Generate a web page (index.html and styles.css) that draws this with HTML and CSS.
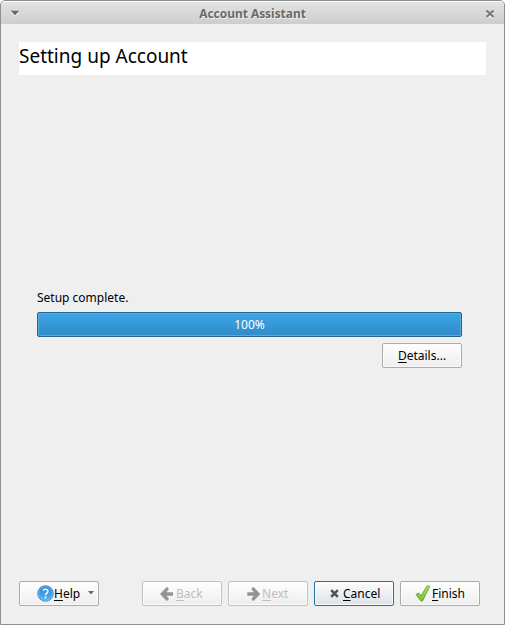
FILE: index.html
```html
<!DOCTYPE html>
<html lang="en">
<head>
<meta charset="utf-8">
<title>Account Assistant</title>
<link rel="stylesheet" href="styles.css">
</head>
<body>
<div class="window">
  <header class="titlebar">
    <svg class="menu-icon" width="10" height="7" viewBox="0 0 10 7"><path d="M1 2h8L5 6.8z" fill="#fff"/><path d="M.8.8h8.4L5 5.6z" fill="#666"/></svg>
    <h1 class="caption">Account Assistant</h1>
    <svg class="close-icon" width="10" height="10" viewBox="0 0 10 10"><path d="M2 3l6 6M8 3L2 9" stroke="#f5f5f5" stroke-width="2.2"/><path d="M1.5 1.5l7 6.5M8.5 1.5L1.5 8" stroke="#777" stroke-width="2.1"/></svg>
  </header>
  <main class="content">
    <h2 class="heading">Setting up Account</h2>
    <section class="progress-area">
      <div class="status">Setup complete.</div>
      <div class="progress">100%</div>
      <button class="button details"><span><u>D</u>etails...</span></button>
    </section>
    <footer class="actions">
      <button class="button help">
        <svg width="17" height="17" viewBox="0 0 17 17"><defs><linearGradient id="blue" x2="0" y2="1"><stop stop-color="#2f83cb"/><stop offset="1" stop-color="#55b9f4"/></linearGradient></defs><circle cx="8.5" cy="8.5" r="7.8" fill="url(#blue)" stroke="#347ebb" stroke-width=".8"/><circle cx="8.5" cy="8.5" r="6.8" fill="none" stroke="#7fc1ee" stroke-width=".7"/><path d="M5.8 5.2Q8.2 3.4 10.2 4.8Q11.9 6.7 9.7 8.2Q8.5 9 8.5 10.3" fill="none" stroke="#fff" stroke-width="1.4"/><circle cx="8.5" cy="12.6" r="1" fill="#fff"/></svg>
        <span><u>H</u>elp</span>
        <svg class="drop" width="6" height="4" viewBox="0 0 6 4"><path d="M0 0h6L3 3.5z" fill="#666"/></svg>
      </button>
      <button class="button back" disabled>
        <svg width="14" height="14" viewBox="0 0 14 14"><path d="M0 7L6.5.3Q8 0 8.6 1.6V2.8L6.4 5.2H13V8.8H6.4L8.6 11.2V12.4Q8 14 6.5 13.7z" fill="#949494"/></svg>
        <span><u>B</u>ack</span>
      </button>
      <button class="button next" disabled>
        <svg width="14" height="14" viewBox="0 0 14 14"><path d="M13.3 7L6.8.3Q5.3 0 4.7 1.6V2.8L6.9 5.2H.3V8.8H6.9L4.7 11.2V12.4Q5.3 14 6.8 13.7z" fill="#949494"/></svg>
        <span><u>N</u>ext</span>
      </button>
      <button class="button cancel">
        <svg width="9" height="9" viewBox="0 0 9 9"><path d="M1.2 1.2l6.6 6.6M7.8 1.2L1.2 7.8" stroke="#505050" stroke-width="2.6"/></svg>
        <span><u>C</u>ancel</span>
      </button>
      <button class="button finish">
        <svg width="16" height="17" viewBox="0 0 16 17"><defs><linearGradient id="green" x2="0" y2="1"><stop stop-color="#b4e56c"/><stop offset="1" stop-color="#6cc62c"/></linearGradient></defs><path d="M1 9.5L3.8 8L6 11L11.8 1.3Q13.2.4 14.7 1.4L7.5 16H6z" fill="url(#green)" stroke="#63a931" stroke-linejoin="round"/></svg>
        <span><u>F</u>inish</span>
      </button>
    </footer>
  </main>
</div>
</body>
</html>
```
FILE: styles.css
```css
* { box-sizing: border-box; }
body {
  margin: 0;
  background: #fff;
  font: 12px/17px "Noto Sans", sans-serif;
  color: #000;
}
.window {
  height: 625px;
  border: 1px solid #8e8e8e;
  border-radius: 5px 5px 0 0;
  background: #efefef;
  overflow: hidden;
  display: flex;
  flex-direction: column;
}
.titlebar {
  height: 23px;
  flex: none;
  display: flex;
  align-items: center;
  padding: 0 9px;
  border-top: 1px solid #fff;
  background: linear-gradient(#e3e3e3, #cdcdcd);
}
.menu-icon { margin-top: 1px; }
.close-icon { margin-top: 1px; }
.caption {
  flex: 1;
  margin: 1px 0 0;
  text-align: center;
  font-size: 12px;
  font-weight: bold;
  line-height: 17px;
  letter-spacing: -0.05px;
  color: #6b6b6b;
  text-shadow: 1px 1px 0 #eee;
}
.content {
  flex: 1;
  display: flex;
  flex-direction: column;
  padding: 18px 18px 18px;
}
.heading {
  width: 467px;
  height: 33px;
  margin: 0;
  background: #fff;
  font-size: 19px;
  font-weight: normal;
  line-height: 28px;
}
.progress-area {
  width: 425px;
  margin: 214px 0 0 18px;
  display: flex;
  flex-direction: column;
}
.status { height: 23px; }
.progress {
  height: 25px;
  border: 1px solid #22648f;
  border-radius: 2px;
  background: linear-gradient(#3ba4e8, #308cc6);
  box-shadow: inset 0 0 0 1px #5bade0;
  color: #fff;
  text-align: center;
  line-height: 24px;
}
.button {
  width: 80px;
  height: 25px;
  flex: none;
  padding: 0;
  border: 1px solid #ababab;
  border-radius: 2px;
  background: linear-gradient(#fefefe, #eeeeee);
  box-shadow: inset 0 0 0 1px #fbfbfb;
  color: #000;
  font: inherit;
  display: flex;
  align-items: center;
  justify-content: flex-start;
}
.button svg { flex: none; }
.button u {
  text-decoration-thickness: 1px;
  text-underline-offset: 2px;
  text-decoration-skip-ink: none;
}
.details {
  align-self: flex-end;
  justify-content: center;
  margin-top: 6px;
}
.actions {
  display: flex;
  gap: 6px;
  margin-top: auto;
}
.help { padding-left: 17px; margin-right: 37px; }
.drop { margin-left: 8px; margin-bottom: 1px; }
.back { padding-left: 17px; gap: 2px; }
.next { padding-left: 18px; gap: 1px; }
.button:disabled { border-color: #c2c2c2; color: #bebebe; }
.cancel {
  padding-left: 15px;
  gap: 4px;
  border-color: #2374a5;
  background: linear-gradient(#fbfcfd, #dce3e9);
}
.finish { padding-left: 14px; gap: 1px; }
```
